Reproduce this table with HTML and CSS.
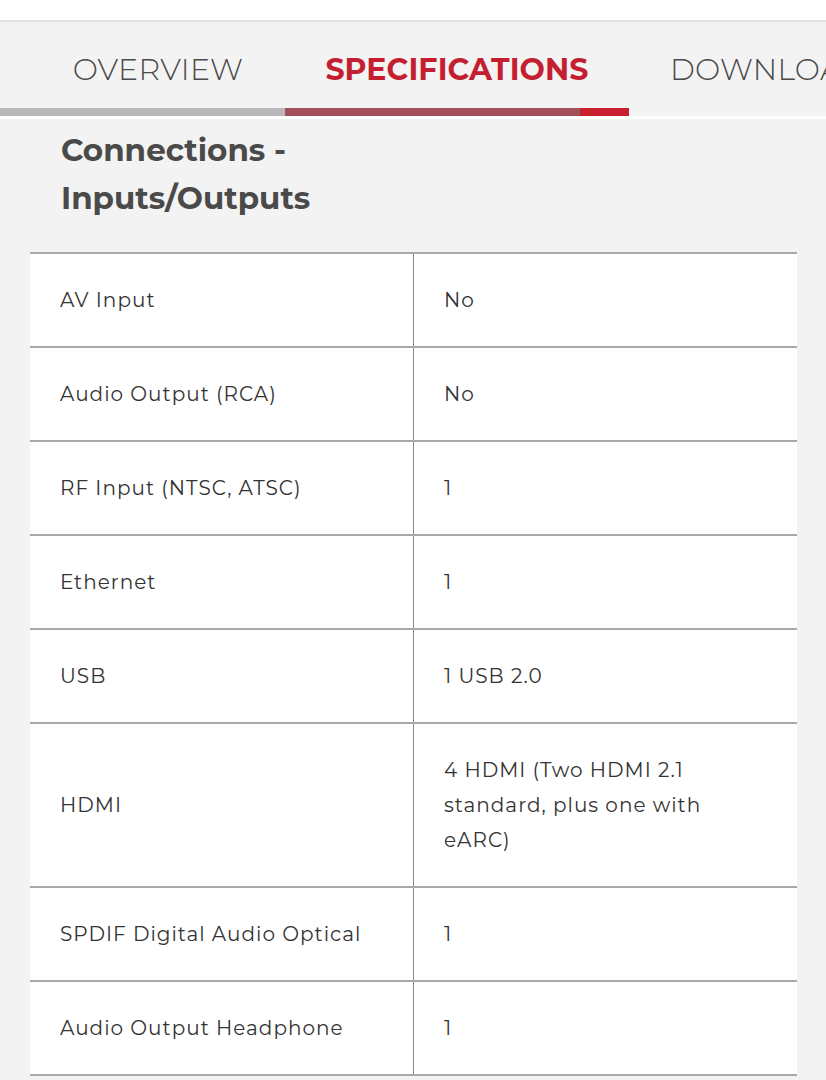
FILE: index.html
```html
<!DOCTYPE html>
<html>
<head>
<meta charset="utf-8">
<link rel="stylesheet" href="styles.css">
</head>
<body>
<div class="topbar"></div>
<nav class="tabs">
  <div class="tab-row">
    <div class="tab tab-first">OVERVIEW</div>
    <div class="tab tab-second active">SPECIFICATIONS</div>
    <div class="tab tab-third">DOWNLOADS</div>
  </div>
  <div class="track">
    <div class="seg seg-gray"></div>
    <div class="seg seg-dark"></div>
    <div class="seg seg-red"></div>
  </div>
</nav>
<main class="content">
  <h2 class="section-title">Connections -<br>Inputs/Outputs</h2>
  <table class="specs">
    <tr><td>AV Input</td><td>No</td></tr>
    <tr><td>Audio Output (RCA)</td><td>No</td></tr>
    <tr><td>RF Input (NTSC, ATSC)</td><td>1</td></tr>
    <tr><td>Ethernet</td><td>1</td></tr>
    <tr><td>USB</td><td>1 USB 2.0</td></tr>
    <tr class="tall"><td>HDMI</td><td>4 HDMI (Two HDMI 2.1 standard, plus one with eARC)</td></tr>
    <tr><td>SPDIF Digital Audio Optical</td><td>1</td></tr>
    <tr><td>Audio Output Headphone</td><td>1</td></tr>
  </table>
</main>
</body>
</html>
```
FILE: styles.css
```css
html, body {
  margin: 0;
  padding: 0;
  background: #f3f3f3;
  overflow: hidden;
  font-family: "Montserrat", "Lato", "Noto Sans", sans-serif;
}
body { width: 826px; height: 1080px; }
.topbar {
  height: 20px;
  background: #ffffff;
  border-bottom: 2px solid #e2e2e2;
}
.tabs {
  background: #f3f3f3;
  border-bottom: 3px solid #ffffff;
}
.tab-row {
  display: flex;
  padding-left: 31px;
  padding-top: 8px;
  height: 78px;
  align-items: center;
  white-space: nowrap;
  overflow: hidden;
}
.tab {
  flex: none;
  font-size: 30px;
  font-weight: 300;
  color: #4a4a4a;
  letter-spacing: 0.3px;
  text-align: center;
}
.tab-first { width: 254px; }
.tab-second { width: 344px; }
.tab-third { padding-left: 41px; }
.tab.active {
  color: #c41f30;
  font-weight: 700;
  letter-spacing: 0.1px;
}
.track {
  display: flex;
  height: 8px;
}
.seg-gray { width: 285px; background: #b9b9b9; }
.seg-dark { width: 295px; background: #a2505a; }
.seg-red { width: 49px; background: #c8202f; }
.content {
  padding: 0 29px 0 30px;
}
.section-title {
  margin: 0;
  padding: 7px 0 30px 31px;
  font-size: 31px;
  font-weight: 700;
  line-height: 48px;
  color: #4a4a4a;
}
.specs {
  width: 767px;
  border-collapse: collapse;
  background: #fff;
  table-layout: fixed;
}
.specs td {
  border-top: 2px solid #a8a8a8;
  border-bottom: 2px solid #a8a8a8;
  height: 92px;
  padding: 0 60px 0 30px;
  font-size: 20px;
  line-height: 35px;
  color: #333;
  letter-spacing: 1px;
  vertical-align: middle;
}
.specs td:first-child {
  width: 333px;
  padding-right: 20px;
  border-right: 1px solid #8a8a8a;
}
.specs tr.tall td { height: 162px; }
```
